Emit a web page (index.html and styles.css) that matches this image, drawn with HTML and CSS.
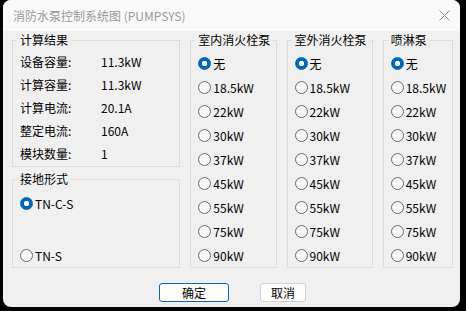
FILE: index.html
```html
<!doctype html>
<html>
<head>
<meta charset="utf-8">
<title>消防水泵控制系统图 (PUMPSYS)</title>
<link rel="stylesheet" href="styles.css">
</head>
<body>

<div class="window">
  <div class="titlebar">
    <span class="title">消防水泵控制系统图 (PUMPSYS)</span>
    <svg class="close" width="11" height="11" viewBox="0 0 11 11">
      <path d="M0.5 0.5 L10.5 10.5 M10.5 0.5 L0.5 10.5" stroke="#8a8a8a" stroke-width="1" fill="none"/>
    </svg>
  </div>

  <div class="content">
    <div class="groups">
      <div class="left-col">
        <fieldset class="group result">
          <legend>计算结果</legend>
          <div class="row"><span class="label">设备容量:</span><span>11.3kW</span></div>
          <div class="row"><span class="label">计算容量:</span><span>11.3kW</span></div>
          <div class="row"><span class="label">计算电流:</span><span>20.1A</span></div>
          <div class="row"><span class="label">整定电流:</span><span>160A</span></div>
          <div class="row"><span class="label">模块数量:</span><span>1</span></div>
        </fieldset>

        <fieldset class="group earth">
          <legend>接地形式</legend>
          <label class="radio"><input type="radio" name="earth" checked>TN-C-S</label>
          <label class="radio"><input type="radio" name="earth">TN-S</label>
        </fieldset>
      </div>

      <fieldset class="group pump">
        <legend>室内消火栓泵</legend>
        <label class="radio"><input type="radio" name="indoor" checked>无</label>
        <label class="radio"><input type="radio" name="indoor">18.5kW</label>
        <label class="radio"><input type="radio" name="indoor">22kW</label>
        <label class="radio"><input type="radio" name="indoor">30kW</label>
        <label class="radio"><input type="radio" name="indoor">37kW</label>
        <label class="radio"><input type="radio" name="indoor">45kW</label>
        <label class="radio"><input type="radio" name="indoor">55kW</label>
        <label class="radio"><input type="radio" name="indoor">75kW</label>
        <label class="radio"><input type="radio" name="indoor">90kW</label>
      </fieldset>

      <fieldset class="group pump">
        <legend>室外消火栓泵</legend>
        <label class="radio"><input type="radio" name="outdoor" checked>无</label>
        <label class="radio"><input type="radio" name="outdoor">18.5kW</label>
        <label class="radio"><input type="radio" name="outdoor">22kW</label>
        <label class="radio"><input type="radio" name="outdoor">30kW</label>
        <label class="radio"><input type="radio" name="outdoor">37kW</label>
        <label class="radio"><input type="radio" name="outdoor">45kW</label>
        <label class="radio"><input type="radio" name="outdoor">55kW</label>
        <label class="radio"><input type="radio" name="outdoor">75kW</label>
        <label class="radio"><input type="radio" name="outdoor">90kW</label>
      </fieldset>

      <fieldset class="group pump spray">
        <legend>喷淋泵</legend>
        <label class="radio"><input type="radio" name="spray" checked>无</label>
        <label class="radio"><input type="radio" name="spray">18.5kW</label>
        <label class="radio"><input type="radio" name="spray">22kW</label>
        <label class="radio"><input type="radio" name="spray">30kW</label>
        <label class="radio"><input type="radio" name="spray">37kW</label>
        <label class="radio"><input type="radio" name="spray">45kW</label>
        <label class="radio"><input type="radio" name="spray">55kW</label>
        <label class="radio"><input type="radio" name="spray">75kW</label>
        <label class="radio"><input type="radio" name="spray">90kW</label>
      </fieldset>
    </div>

    <div class="buttons">
      <button class="btn ok">确定</button>
      <button class="btn cancel">取消</button>
    </div>
  </div>
</div>

</body>
</html>
```

FILE: styles.css
```css
html, body {
  margin: 0;
  padding: 0;
  background: #000;
}

body {
  font: 12px "Noto Sans CJK SC", "Noto Sans", sans-serif;
  color: #000;
}

.window {
  margin-left: 3px;
  width: 457px;
  height: 307px;
  border-radius: 8px;
  background: #f0f0f0;
  overflow: hidden;
  display: flex;
  flex-direction: column;
}

.titlebar {
  height: 31px;
  background: #f9f9f9;
  display: flex;
  align-items: center;
  justify-content: space-between;
  padding: 0 10px;
}

.title {
  color: #9a9a9a;
  font-size: 12px;
  line-height: 16px;
}

.close {
  display: block;
}

.content {
  padding: 1px 7px 0 9px;
  display: flex;
  flex-direction: column;
}

.groups {
  display: flex;
  gap: 10px;
  height: 236px;
}

.left-col {
  width: 170px;
  display: flex;
  flex-direction: column;
  gap: 4px;
}

.group {
  margin: 0;
  padding: 0;
  border: 1px solid #dcdcdc;
  min-width: 0;
}

.group legend {
  margin-left: 4px;
  padding: 0 3px;
  line-height: 16px;
  white-space: nowrap;
}

.row {
  display: flex;
  line-height: 23px;
  padding-left: 7px;
}

.result {
  padding-top: 2px;
  padding-bottom: 1px;
}

.label {
  width: 81px;
}

.earth {
  flex: 1;
  display: flex;
  flex-direction: column;
  justify-content: space-between;
  padding-top: 4px;
}

.pump {
  width: 87px;
  box-sizing: border-box;
  padding-top: 3px;
}

.spray {
  width: 71px;
}

.radio {
  display: flex;
  align-items: center;
  height: 24px;
  padding-left: 7px;
  white-space: nowrap;
}

.radio input {
  appearance: none;
  -webkit-appearance: none;
  width: 13px;
  height: 13px;
  margin: 0 2px 0 0;
  border: 1px solid #6a6a6a;
  border-radius: 50%;
  background: #f7f7f7;
  box-sizing: border-box;
  flex: none;
}

.radio input:checked {
  border-color: #0067c0;
  background: radial-gradient(circle, #fff 0, #fff 2.5px, #0067c0 3px);
}

.buttons {
  display: flex;
  justify-content: center;
  gap: 31px;
  margin-top: 15px;
}

.btn {
  height: 19px;
  padding: 0;
  font: 12px "Noto Sans CJK SC", "Noto Sans", sans-serif;
  color: #000;
  background: #fdfdfd;
  border: 1px solid #d0d0d0;
  border-radius: 3px;
  line-height: 17px;
}

.ok {
  width: 70px;
  border-color: #0067c0;
}

.cancel {
  width: 46px;
}
```
